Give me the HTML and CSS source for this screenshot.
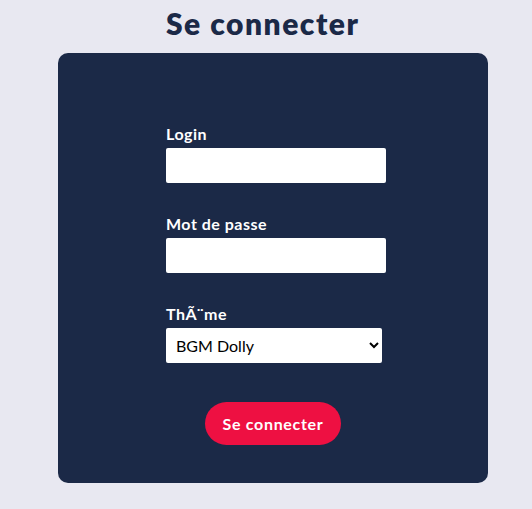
FILE: index.html
```html
<!DOCTYPE html>
<html>
<head>
    <title>Se connecter</title>
    <link rel="stylesheet" href="styles.css">
</head>
<body>
    <div class="wrapper">
        <h1>Se connecter</h1>
        <form class="card">
            <div class="field">
                <label for="login">Login</label>
                <input type="text" id="login" name="login">
            </div>
            <div class="field">
                <label for="password">Mot de passe</label>
                <input type="password" id="password" name="password">
            </div>
            <div class="field">
                <label for="theme">ThÃ¨me</label>
                <select id="theme" name="theme">
                    <option>BGM Dolly</option>
                </select>
            </div>
            <div class="actions">
                <button type="submit">Se connecter</button>
            </div>
        </form>
    </div>
</body>
</html>
```

FILE: styles.css
```css
body {
    margin: 0;
    background: #e8e8f1;
    font-family: Lato, "Open Sans", sans-serif;
}
.wrapper {
    margin-left: 58px;
    width: 430px;
}
h1 {
    margin: 0;
    padding: 6px 0 0 108px;
    line-height: 34px;
    font-size: 30px;
    font-weight: 800;
    color: #1b2947;
    letter-spacing: 1.5px;
}
.card {
    margin-top: 13px;
    background: #1b2947;
    border-radius: 10px;
    padding: 71px 0 38px 108px;
    display: flex;
    flex-direction: column;
    gap: 31px;
}
.field {
    display: flex;
    flex-direction: column;
    gap: 4px;
}
label {
    color: #fff;
    font-size: 16px;
    line-height: 20px;
    font-weight: 700;
    letter-spacing: 0.5px;
}
input {
    width: 220px;
    height: 35px;
    box-sizing: border-box;
    border: none;
    border-radius: 2px;
    background: #fff;
}
select {
    width: 216px;
    height: 35px;
    box-sizing: border-box;
    border: none;
    border-radius: 2px;
    background: #fff;
    font-family: inherit;
    font-size: 16px;
    padding-left: 6px;
    color: #000;
}
.actions {
    margin-top: 8px;
    margin-left: -108px;
    display: flex;
    justify-content: center;
}
button {
    width: 136px;
    height: 43px;
    border: none;
    border-radius: 22px;
    background: #ee1042;
    color: #fff;
    font-family: inherit;
    font-size: 16px;
    font-weight: 700;
    letter-spacing: 0.7px;
}
```
